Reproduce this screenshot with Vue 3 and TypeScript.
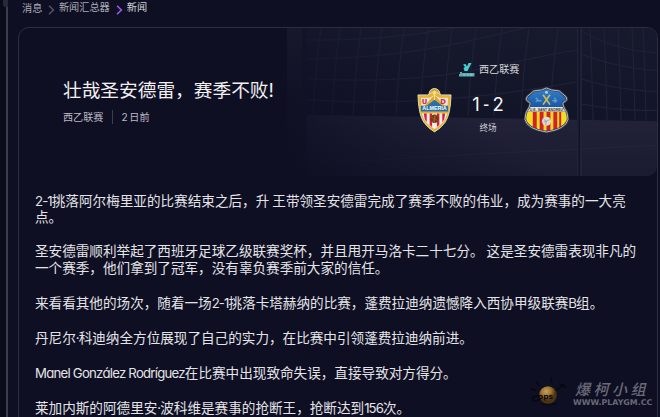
<script setup lang="ts">
interface Paragraph {
  lines: string[]
  tight?: boolean
}

const crumbs = ['消息', '新闻汇总器', '新闻']

const match = {
  competition: '西乙联赛',
  home: 1,
  away: 2,
  status: '终场',
}

const article = {
  title: '壮哉圣安德雷，赛季不败!',
  age: '2 日前',
}

const paragraphs: Paragraph[] = [
  {
    lines: ['2-1挑落阿尔梅里亚的比赛结束之后，升 王带领圣安德雷完成了赛季不败的伟业，成为赛事的一大亮', '点。'],
    tight: true,
  },
  {
    lines: [
      '圣安德雷顺利举起了西班牙足球乙级联赛奖杯，并且甩开马洛卡二十七分。 这是圣安德雷表现非凡的',
      '一个赛季，他们拿到了冠军，没有辜负赛季前大家的信任。',
    ],
  },
  { lines: ['来看看其他的场次，随着一场2-1挑落卡塔赫纳的比赛，蓬费拉迪纳遗憾降入西协甲级联赛B组。'] },
  { lines: ['丹尼尔·科迪纳全方位展现了自己的实力，在比赛中引领蓬费拉迪纳前进。'] },
  { lines: ['Manel González Rodríguez在比赛中出现致命失误，直接导致对方得分。'] },
  { lines: ['莱加内斯的阿德里安·波科维是赛事的抢断王，抢断达到156次。'] },
]

// latin runs are set tighter than the Chinese text around them
const LATIN = /([A-Za-z0-9À-ÿ·-]+(?: [A-Za-zÀ-ÿ]+)*)/

function splitRuns(line: string) {
  return line
    .split(LATIN)
    .map((text, i) => ({ text, latin: i % 2 === 1, name: text.includes(' ') }))
    .filter((run) => run.text)
}

const netColumns = [26, 45, 66, 87, 109, 133, 157, 181, 207, 234, 263]
const netColumnsRight = [303, 317, 331, 345, 356]
</script>

<template>
  <div class="page">
    <aside class="edge"><i class="edge-mark"></i></aside>
    <main class="content">
      <nav class="crumbs">
        <template v-for="(crumb, i) in crumbs" :key="crumb">
          <svg v-if="i > 0" class="chevron" :class="{ active: i === crumbs.length - 1 }" viewBox="0 0 7 10">
            <path d="M1 .8 5.4 5 1 9.2" />
          </svg>
          <span class="crumb" :class="{ first: i === 0, current: i === crumbs.length - 1 }">{{ crumb }}</span>
        </template>
      </nav>

      <article class="card">
        <header class="hero">
          <svg class="backdrop" viewBox="0 0 370 149" preserveAspectRatio="none">
            <defs>
              <linearGradient id="sky" x2="0" y2="1">
                <stop offset="0" stop-color="#17192d" />
                <stop offset=".6" stop-color="#121428" />
              </linearGradient>
              <linearGradient id="grass" x2="0" y2="1">
                <stop offset="0" stop-color="#222339" />
                <stop offset="1" stop-color="#1a1b30" />
              </linearGradient>
              <linearGradient id="post" x2="0" y2="1">
                <stop offset="0" stop-color="#1d1e32" />
                <stop offset=".8" stop-color="#121327" />
              </linearGradient>
              <linearGradient id="fade" x1="0" y1="1" x2=".6" y2=".75">
                <stop offset="0" stop-color="#0f0f24" />
                <stop offset="1" stop-color="#0f0f24" stop-opacity="0" />
              </linearGradient>
            </defs>
            <rect width="370" height="149" fill="url(#sky)" />
            <path d="M0 87 370 94V149H0Z" fill="url(#grass)" />
            <path d="M20 137 190 127 370 118" stroke="#242539" fill="none" />
            <g fill="none" stroke="#1f2136" stroke-width="1.3">
              <path v-for="x in netColumns" :key="x" :d="`M${x + 8} 0Q${x + 2} 44 ${x} 88`" />
              <path v-for="x in netColumnsRight" :key="x" :d="`M${x} 0Q${x + 2} 44 ${x + 3} 93`" />
              <path d="M20 12Q110 14 207 -8M20 31Q110 31 200 9T291 -8M20 51Q120 57 200 40T291 22M20 72Q140 82 291 54" />
              <path d="M291 1Q325 22 370 25M291 25Q325 39 370 43M291 50Q325 62 370 64M291 76Q330 84 370 83" />
            </g>
            <path d="M0 0H15V149H0Z" fill="url(#post)" />
            <path d="M15 0H20V149H15Z" fill="#14162a" />
            <path d="M290 0H295V149H290Z" fill="#202238" />
            <path d="M291.500 0H293V149H291.500Z" fill="#101327" />
            <rect width="370" height="149" fill="url(#fade)" />
          </svg>

          <div class="headline">
            <h1>{{ article.title }}</h1>
            <p class="meta">
              <span>{{ match.competition }}</span>
              <i class="divider"></i>
              <span class="age">{{ article.age }}</span>
            </p>
          </div>

          <section class="match">
            <div class="competition">
              <svg class="league" viewBox="0 0 16 14">
                <path d="M4 1.500 6.500 1 8 3.500 9.500 0H12.500L10.500 4 8.500 8H5.500L4.500 5 6 4Z" fill="#43cfd3" />
                <path d="M1 9H3V10H15.500V13.500H0V11H1Z" fill="#5fa9b3" />
                <path d="M4.500 12H6M8 12H9.500M11 12H13.500" stroke="#9fdce0" stroke-width="1" />
              </svg>
              <span>{{ match.competition }}</span>
            </div>
            <div class="result">
              <svg class="crest home" viewBox="0 0 36 47">
                <circle cx="18" cy="7" r="5.6" fill="#caa53b" stroke="#e5dfc5" />
                <path
                  d="M1 8H11L18 4 25 8H35Q34.500 28 29 36 25 42 18 46 11 42 7 36 1.500 28 1 8Z"
                  fill="#e5b42b"
                  stroke="#ded9ca"
                />
                <path d="M4 11H13L18 8 23 11H32L31.500 19H4.500Z" fill="#f4ded9" />
                <path d="M18 8 7 20H29Z" fill="#dca927" />
                <path d="M5 27H31Q29 37 18 43 7 37 5 27Z" fill="#f4ece8" />
                <path
                  d="M7 27H10V36L8 33ZM13 27H15.500V41L13 39ZM20.500 27H23V39L20.500 41ZM26 27H29L28 33 26 36Z"
                  fill="#d91f3b"
                />
                <path d="M4 19H10L18 13 26 19H32V25H4Z" fill="#2670ab" />
                <text x="5" y="17" class="crest-letter">U</text>
                <text x="24" y="17" class="crest-letter">D</text>
                <text x="5.500" y="24" class="crest-name" textLength="25" lengthAdjust="spacingAndGlyphs">ALMERIA</text>
                <circle cx="18" cy="32.500" r="4.300" fill="#713a16" />
                <path d="M14.500 31 21 34M16 36 20 29M18 28V37" stroke="#b0662b" stroke-width=".7" />
                <circle cx="18" cy="6" r="2" fill="#f5dc70" />
                <path d="M18 8V13" stroke="#f3e8b0" />
              </svg>

              <div class="score">
                <strong><span>{{ match.home }}</span><i class="dash">-</i><span>{{ match.away }}</span></strong>
                <small>{{ match.status }}</small>
              </div>

              <svg class="crest away" viewBox="0 0 46 47">
                <defs>
                  <clipPath id="awayShape">
                    <path
                      d="M10 4 18 3 23 1 28 3 36 4 43 10Q45 13 42 15 38 15 41 21 45 26 45 33 43 43 23 46 3 43 1 33 1 26 5 21 8 15 4 15 1 13 3 10Z"
                    />
                  </clipPath>
                  <linearGradient id="blue" x2="0" y2="1">
                    <stop offset="0" stop-color="#3585d2" />
                    <stop offset="1" stop-color="#1553a3" />
                  </linearGradient>
                </defs>
                <g clip-path="url(#awayShape)">
                  <path d="M0 0H46V22H0Z" fill="url(#blue)" />
                  <path d="M0 25H46V47H0Z" fill="#f3dc22" />
                  <path d="M9 25H13V47H9ZM16 25H20V47H16ZM23 25H27V47H23ZM30 25H34V47H30ZM36 25H38V47H36Z" fill="#d3202b" />
                  <path d="M0 20.500H46V25H0Z" fill="#e6e4dc" />
                </g>
                <path
                  d="M10 4 18 3 23 1 28 3 36 4 43 10Q45 13 42 15 38 15 41 21 45 26 45 33 43 43 23 46 3 43 1 33 1 26 5 21 8 15 4 15 1 13 3 10Z"
                  fill="none"
                  stroke="#343a47"
                  stroke-width="2.400"
                />
                <path
                  d="M10 4 18 3 23 1 28 3 36 4 43 10Q45 13 42 15 38 15 41 21 45 26 45 33 43 43 23 46 3 43 1 33 1 26 5 21 8 15 4 15 1 13 3 10Z"
                  fill="none"
                  stroke="#c5c9ce"
                  stroke-width=".9"
                />
                <path d="M19.500 8 26.500 18M26.500 8 19.500 18" stroke="#d4ba4c" stroke-width="1.700" />
                <circle cx="23" cy="5.500" r="1.500" fill="#bdd2de" />
                <path d="M12 11 15 14H18M14 14 12 15M29 14H33L31 11M32 14V16" stroke="#6b9bb6" fill="none" stroke-width="1.500" />
                <text x="6" y="24.400" class="away-name" textLength="34" lengthAdjust="spacingAndGlyphs">U.E. SANT ANDREU</text>
                <circle cx="23" cy="35" r="4.700" fill="#dddcd6" />
                <path d="M20 33 23 35 27 33M23 35 22 39M20 36 23 35" stroke="#99918c" fill="none" stroke-width=".7" />
              </svg>
            </div>
          </section>
        </header>

        <div class="story">
          <p v-for="(p, i) in paragraphs" :key="i" :class="{ tight: p.tight }">
            <span v-for="(line, n) in p.lines" :key="n" class="line">
              <span
                v-for="(run, r) in splitRuns(line)"
                :key="r"
                :class="{ latin: run.latin, name: run.latin && run.name }"
                >{{ run.text }}</span
              >
            </span>
          </p>
        </div>
      </article>
    </main>

    <div class="watermark">
      <svg class="mascot" viewBox="0 0 36 30">
        <defs>
          <radialGradient id="ball" cx=".4" cy=".3">
            <stop offset="0" stop-color="#c2a262" />
            <stop offset=".6" stop-color="#9a7028" />
            <stop offset="1" stop-color="#4c3312" />
          </radialGradient>
        </defs>
        <g stroke="#050610" fill="none" stroke-width="1.400" stroke-linecap="round">
          <path d="M6 5 9 8M21 1 22 5M1 12 5 13M26 13 32 9M30 7 32 9 34 7M32 9 35 10M8 19Q1 19 3 23 5 26 10 22" />
        </g>
        <ellipse cx="19" cy="27" rx="8" ry="1.500" fill="#0a0a18" />
        <circle cx="18" cy="18" r="8.800" fill="url(#ball)" />
        <text x="8" y="22" class="mascot-text">ops</text>
      </svg>
      <div class="mark-text">
        <span class="mark-name">爆柯小组</span>
        <span class="mark-url">WWW.PLAYGM.CC</span>
      </div>
    </div>
  </div>
</template>

<style>
body {
  margin: 0;
  background: #0f0f24;
  overflow: hidden;
}
</style>

<style scoped>
.page {
  position: relative;
  display: flex;
  width: 660px;
  height: 417px;
  overflow: hidden;
  background: #0f0f24;
  color: #e4e4e7;
  font-family: Inter, 'Noto Sans CJK SC', sans-serif;
  font-feature-settings: 'cv11';
}
.edge {
  box-sizing: border-box;
  width: 8px;
  flex: none;
  background: #090d1b;
  border-right: 2px solid #3c3b50;
}
.edge-mark {
  display: block;
  width: 5px;
  height: 7px;
  margin-left: 3px;
  background: #272b39;
  border-radius: 0 0 0 3px;
}
.content {
  flex: 1;
  min-width: 0;
  padding-left: 10px;
}
.crumbs {
  display: flex;
  height: 27px;
  padding-left: 4px;
  font-size: 10.2px;
  line-height: 14px;
  color: #aaaab8;
}
.crumb.first {
  padding-top: 1px;
}
.crumb.current {
  color: #d4d4d8;
}
.chevron {
  width: 7px;
  height: 10px;
  margin: 5px 4px 0 5.5px;
  fill: none;
  stroke: #555366;
  stroke-width: 1.5;
}
.chevron.active {
  margin-left: 6px;
  stroke: #9c5cf2;
}
.card {
  box-sizing: border-box;
  width: 640px;
  height: 410px;
  border: 1px solid #2d2d40;
  border-radius: 11px;
}
.hero {
  position: relative;
  display: flex;
  height: 148px;
  border-radius: 10px 10px 10px 0;
  overflow: hidden;
}
.backdrop {
  position: absolute;
  right: 0;
  top: 0;
  width: 370px;
  height: 148px;
}
.headline {
  position: relative;
  box-sizing: border-box;
  width: 360px;
  flex: none;
  padding: 50px 0 0 44px;
}
h1 {
  margin: 0;
  font-size: 18.7px;
  line-height: 26px;
  font-weight: 400;
  color: #f1f1f2;
  white-space: nowrap;
}
.meta {
  display: flex;
  align-items: center;
  margin: 6px 0 0;
  font-size: 10.1px;
  line-height: 14px;
  color: #b9b9c4;
}
.divider {
  width: 1px;
  height: 14px;
  margin: 0 8px 0 9px;
  background: #3e3e51;
}
.age {
  word-spacing: -1px;
}
.match {
  position: relative;
  display: flex;
  flex-direction: column;
  width: 200px;
  padding-top: 33px;
}
.competition {
  display: flex;
  align-items: center;
  gap: 4px;
  height: 15px;
  padding-left: 80px;
  font-size: 10.1px;
  color: #d5d5dc;
}
.league {
  width: 16px;
  height: 14px;
  margin-top: 3px;
}
.result {
  display: flex;
  align-items: flex-start;
  padding: 11px 0 0 38px;
}
.crest {
  flex: none;
  height: 46px;
}
.home {
  width: 35px;
}
.away {
  width: 45px;
}
.crest-letter {
  font: 700 7px 'DejaVu Sans', sans-serif;
  fill: #c92d43;
}
.crest-name {
  font: 700 5.5px 'Liberation Sans', sans-serif;
  fill: #fff;
}
.away-name {
  font: 700 3.6px 'Liberation Sans', sans-serif;
  fill: #343842;
}
.score {
  display: flex;
  flex: none;
  flex-direction: column;
  align-items: center;
  width: 72px;
  padding-top: 6px;
}
.score strong {
  display: flex;
  align-items: center;
  gap: 3px;
  font-size: 18.5px;
  line-height: 22px;
  font-weight: 400;
  color: #f4f4f5;
}
.dash {
  font-style: normal;
  transform: scaleX(0.75);
  margin: 0 -1px;
}
.score small {
  margin-top: 7px;
  font-size: 8.6px;
  line-height: 12px;
  color: #d0d0d7;
}
.story {
  padding: 17px 0 0 16px;
  font-size: 13.6px;
  line-height: 17.5px;
}
.story p {
  margin: 0 0 17.5px;
}
.story p.tight {
  line-height: 16px;
}
.line {
  display: block;
  white-space: nowrap;
  word-spacing: -0.8px;
}
.latin {
  font-size: 13.2px;
  letter-spacing: -0.9px;
}
.latin.name {
  letter-spacing: -0.76px;
  word-spacing: 0;
}
.watermark {
  position: absolute;
  right: 7px;
  bottom: 10px;
  display: flex;
  align-items: flex-end;
  color: #696a78;
}
.mascot {
  width: 36px;
  height: 30px;
  margin-right: 7px;
}
.mascot-text {
  font: 700 7.5px 'DejaVu Sans', sans-serif;
  fill: #0b0a12;
}
.mark-text {
  display: flex;
  flex-direction: column;
  width: 80px;
}
.mark-name {
  padding-left: 2px;
  font-size: 15px;
  line-height: 17px;
  font-style: italic;
  font-weight: 500;
  letter-spacing: 3.5px;
  white-space: nowrap;
}
.mark-url {
  font: 700 7.9px/9px 'DejaVu Sans', sans-serif;
  white-space: nowrap;
}
</style>
